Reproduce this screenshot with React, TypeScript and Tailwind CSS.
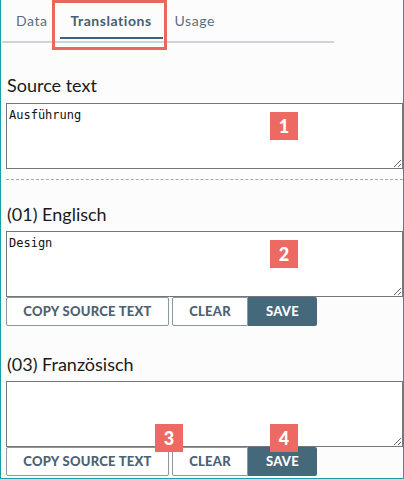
import type { ReactNode } from 'react'

const LATO = { fontFamily: 'Lato, "Open Sans", sans-serif' }

function Badge({ n, className }: { n: number; className: string }) {
    return (
        <div
            className={`absolute flex h-[28px] w-[28px] items-center justify-center bg-[#ec6a62] text-[18px] font-black text-white ${className}`}
            style={LATO}
        >
            {n}
        </div>
    )
}

function Label({ children, className = '' }: { children: ReactNode; className?: string }) {
    return <div className={`pl-[1px] text-[18px] leading-[22px] text-[#1a1a1a] ${className}`}>{children}</div>
}

function Field({ value }: { value: string }) {
    return (
        <textarea
            defaultValue={value}
            className="block h-[66px] w-[397px] resize border border-[#767676] bg-white p-[2px] pt-[4px] text-[12px] leading-[15px] text-[#111]"
            style={{ fontFamily: '"DejaVu Sans Mono", "Liberation Mono", monospace' }}
        />
    )
}

function Buttons() {
    return (
        <div className="flex h-[29px] text-[13px] font-black tracking-[0.02em]">
            <button className="w-[163px] rounded-[2px] border border-[#8a98a2] bg-white text-[#4b6272]">COPY SOURCE TEXT</button>
            <button className="ml-[3px] w-[76px] rounded-l-[2px] border border-[#8a98a2] bg-white text-[#4b6272]">CLEAR</button>
            <button className="w-[69px] rounded-r-[2px] bg-[#46687b] text-white">SAVE</button>
        </div>
    )
}

export default function App() {
    return (
        <div className="relative h-[479px] w-[404px] overflow-hidden border-x border-b border-[#1b9ea8] bg-[#fcfcfc]" style={LATO}>
            {/* tabs */}
            <div className="ml-[1px] flex h-[43px] w-[332px] border-b-2 border-[#cdd3da] text-[14px] tracking-[0.04em] text-[#5a6f7e]">
                <div className="pl-[14px] pt-[10px]">Data</div>
                <div className="relative ml-[12px] w-[103px] pt-[10px] text-center font-bold text-[#46606f]">
                    Translations
                    <div className="absolute bottom-[2px] left-0 h-[2px] w-full bg-[#3f6478]" />
                </div>
                <div className="ml-[12px] pt-[10px]">Usage</div>
            </div>
            <div className="absolute left-[51px] top-0 h-[50px] w-[115px] border-[3px] border-[#e8675f]" />

            <div className="pl-[5px]">
                <Label className="mt-[31px]">Source text</Label>
                <div className="mt-[7px]">
                    <Field value="Ausführung" />
                </div>
                <div className="mt-[10px] border-t border-dashed border-[#a8a8a8]" />

                <Label className="mt-[23px]">(01) Englisch</Label>
                <div className="mt-[6px]">
                    <Field value="Design" />
                </div>
                <Buttons />

                <Label className="mt-[27px]">(03) Französisch</Label>
                <div className="mt-[6px]">
                    <Field value="" />
                </div>
                <Buttons />
            </div>

            <Badge n={1} className="left-[269px] top-[112px]" />
            <Badge n={2} className="left-[269px] top-[240px]" />
            <Badge n={3} className="left-[154px] top-[424px]" />
            <Badge n={4} className="left-[269px] top-[424px]" />
        </div>
    )
}
